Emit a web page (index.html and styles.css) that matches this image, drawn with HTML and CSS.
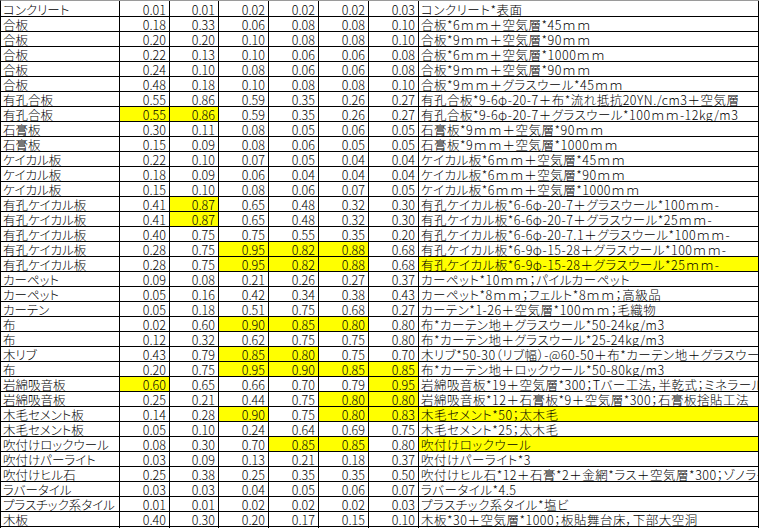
FILE: index.html
```html
<!DOCTYPE html>
<html lang="ja">
<head>
<meta charset="utf-8">
<title>吸音率表</title>
<link rel="stylesheet" href="styles.css">
</head>
<body>
<div class="sheet">
<div class="row first"><div class="c a">コンクリート</div><div class="c n">0.01</div><div class="c n">0.01</div><div class="c n">0.02</div><div class="c n">0.02</div><div class="c n">0.02</div><div class="c n">0.03</div><div class="c t">コンクリート*表面</div></div>
<div class="row"><div class="c a">合板</div><div class="c n">0.18</div><div class="c n">0.33</div><div class="c n">0.06</div><div class="c n">0.08</div><div class="c n">0.08</div><div class="c n">0.10</div><div class="c t">合板*6ｍｍ＋空気層*45ｍｍ</div></div>
<div class="row"><div class="c a">合板</div><div class="c n">0.20</div><div class="c n">0.20</div><div class="c n">0.10</div><div class="c n">0.08</div><div class="c n">0.08</div><div class="c n">0.10</div><div class="c t">合板*9ｍｍ＋空気層*90ｍｍ</div></div>
<div class="row"><div class="c a">合板</div><div class="c n">0.22</div><div class="c n">0.13</div><div class="c n">0.10</div><div class="c n">0.06</div><div class="c n">0.06</div><div class="c n">0.08</div><div class="c t">合板*6ｍｍ＋空気層*1000ｍｍ</div></div>
<div class="row"><div class="c a">合板</div><div class="c n">0.24</div><div class="c n">0.10</div><div class="c n">0.08</div><div class="c n">0.06</div><div class="c n">0.06</div><div class="c n">0.08</div><div class="c t">合板*9ｍｍ＋空気層*90ｍｍ</div></div>
<div class="row"><div class="c a">合板</div><div class="c n">0.48</div><div class="c n">0.18</div><div class="c n">0.10</div><div class="c n">0.08</div><div class="c n">0.08</div><div class="c n">0.10</div><div class="c t">合板*9ｍｍ＋グラスウール*45ｍｍ</div></div>
<div class="row"><div class="c a">有孔合板</div><div class="c n">0.55</div><div class="c n">0.86</div><div class="c n">0.59</div><div class="c n">0.35</div><div class="c n">0.26</div><div class="c n">0.27</div><div class="c t">有孔合板*9-6φ-20-7＋布*流れ抵抗20YN./cm3＋空気層</div></div>
<div class="row"><div class="c a">有孔合板</div><div class="c n y">0.55</div><div class="c n y">0.86</div><div class="c n">0.59</div><div class="c n">0.35</div><div class="c n">0.26</div><div class="c n">0.27</div><div class="c t">有孔合板*9-6φ-20-7＋グラスウール*100ｍｍ-12kg/m3</div></div>
<div class="row"><div class="c a">石膏板</div><div class="c n">0.30</div><div class="c n">0.11</div><div class="c n">0.08</div><div class="c n">0.05</div><div class="c n">0.06</div><div class="c n">0.05</div><div class="c t">石膏板*9ｍｍ＋空気層*90ｍｍ</div></div>
<div class="row"><div class="c a">石膏板</div><div class="c n">0.15</div><div class="c n">0.09</div><div class="c n">0.08</div><div class="c n">0.06</div><div class="c n">0.05</div><div class="c n">0.05</div><div class="c t">石膏板*9ｍｍ＋空気層*1000ｍｍ</div></div>
<div class="row"><div class="c a">ケイカル板</div><div class="c n">0.22</div><div class="c n">0.10</div><div class="c n">0.07</div><div class="c n">0.05</div><div class="c n">0.04</div><div class="c n">0.04</div><div class="c t">ケイカル板*6ｍｍ＋空気層*45ｍｍ</div></div>
<div class="row"><div class="c a">ケイカル板</div><div class="c n">0.18</div><div class="c n">0.09</div><div class="c n">0.06</div><div class="c n">0.04</div><div class="c n">0.04</div><div class="c n">0.04</div><div class="c t">ケイカル板*6ｍｍ＋空気層*90ｍｍ</div></div>
<div class="row"><div class="c a">ケイカル板</div><div class="c n">0.15</div><div class="c n">0.10</div><div class="c n">0.08</div><div class="c n">0.06</div><div class="c n">0.07</div><div class="c n">0.05</div><div class="c t">ケイカル板*6ｍｍ＋空気層*1000ｍｍ</div></div>
<div class="row"><div class="c a">有孔ケイカル板</div><div class="c n">0.41</div><div class="c n y">0.87</div><div class="c n">0.65</div><div class="c n">0.48</div><div class="c n">0.32</div><div class="c n">0.30</div><div class="c t">有孔ケイカル板*6-6φ-20-7＋グラスウール*100ｍｍ-</div></div>
<div class="row"><div class="c a">有孔ケイカル板</div><div class="c n">0.41</div><div class="c n y">0.87</div><div class="c n">0.65</div><div class="c n">0.48</div><div class="c n">0.32</div><div class="c n">0.30</div><div class="c t">有孔ケイカル板*6-6φ-20-7＋グラスウール*25ｍｍ-</div></div>
<div class="row"><div class="c a">有孔ケイカル板</div><div class="c n">0.40</div><div class="c n">0.75</div><div class="c n">0.75</div><div class="c n">0.55</div><div class="c n">0.35</div><div class="c n">0.20</div><div class="c t">有孔ケイカル板*6-6φ-20-7.1＋グラスウール*100ｍｍ-</div></div>
<div class="row"><div class="c a">有孔ケイカル板</div><div class="c n">0.28</div><div class="c n">0.75</div><div class="c n y">0.95</div><div class="c n y">0.82</div><div class="c n y">0.88</div><div class="c n">0.68</div><div class="c t">有孔ケイカル板*6-9φ-15-28＋グラスウール*100ｍｍ-</div></div>
<div class="row"><div class="c a">有孔ケイカル板</div><div class="c n">0.28</div><div class="c n">0.75</div><div class="c n y">0.95</div><div class="c n y">0.82</div><div class="c n y">0.88</div><div class="c n">0.68</div><div class="c t y">有孔ケイカル板*6-9φ-15-28＋グラスウール*25ｍｍ-</div></div>
<div class="row"><div class="c a">カーペット</div><div class="c n">0.09</div><div class="c n">0.08</div><div class="c n">0.21</div><div class="c n">0.26</div><div class="c n">0.27</div><div class="c n">0.37</div><div class="c t">カーペット*10ｍｍ；パイルカーペット</div></div>
<div class="row"><div class="c a">カーペット</div><div class="c n">0.05</div><div class="c n">0.16</div><div class="c n">0.42</div><div class="c n">0.34</div><div class="c n">0.38</div><div class="c n">0.43</div><div class="c t">カーペット*8ｍｍ；フェルト*8ｍｍ；高級品</div></div>
<div class="row"><div class="c a">カーテン</div><div class="c n">0.05</div><div class="c n">0.18</div><div class="c n">0.51</div><div class="c n">0.75</div><div class="c n">0.68</div><div class="c n">0.27</div><div class="c t">カーテン*1-26＋空気層*100ｍｍ；毛織物</div></div>
<div class="row"><div class="c a">布</div><div class="c n">0.02</div><div class="c n">0.60</div><div class="c n y">0.90</div><div class="c n y">0.85</div><div class="c n y">0.80</div><div class="c n">0.80</div><div class="c t">布*カーテン地＋グラスウール*50-24kg/m3</div></div>
<div class="row"><div class="c a">布</div><div class="c n">0.12</div><div class="c n">0.32</div><div class="c n">0.62</div><div class="c n">0.75</div><div class="c n">0.75</div><div class="c n">0.80</div><div class="c t">布*カーテン地＋グラスウール*25-24kg/m3</div></div>
<div class="row"><div class="c a">木リブ</div><div class="c n">0.43</div><div class="c n">0.79</div><div class="c n y">0.85</div><div class="c n y">0.80</div><div class="c n">0.75</div><div class="c n">0.70</div><div class="c t">木リブ*50-30（リブ幅）-@60-50＋布*カーテン地＋グラスウール</div></div>
<div class="row"><div class="c a">布</div><div class="c n">0.20</div><div class="c n">0.75</div><div class="c n y">0.95</div><div class="c n y">0.90</div><div class="c n y">0.85</div><div class="c n y">0.85</div><div class="c t">布*カーテン地＋ロックウール*50-80kg/m3</div></div>
<div class="row"><div class="c a">岩綿吸音板</div><div class="c n y">0.60</div><div class="c n">0.65</div><div class="c n">0.66</div><div class="c n">0.70</div><div class="c n">0.79</div><div class="c n y">0.95</div><div class="c t">岩綿吸音板*19＋空気層*300；Tバー工法，半乾式；ミネラールウール</div></div>
<div class="row"><div class="c a">岩綿吸音板</div><div class="c n">0.25</div><div class="c n">0.21</div><div class="c n">0.44</div><div class="c n">0.75</div><div class="c n y">0.80</div><div class="c n y">0.80</div><div class="c t">岩綿吸音板*12＋石膏板*9＋空気層*300；石膏板捨貼工法</div></div>
<div class="row"><div class="c a">木毛セメント板</div><div class="c n">0.14</div><div class="c n">0.28</div><div class="c n y">0.90</div><div class="c n">0.75</div><div class="c n y">0.80</div><div class="c n y">0.83</div><div class="c t y">木毛セメント*50；太木毛</div></div>
<div class="row"><div class="c a">木毛セメント板</div><div class="c n">0.05</div><div class="c n">0.10</div><div class="c n">0.24</div><div class="c n">0.64</div><div class="c n">0.69</div><div class="c n">0.75</div><div class="c t">木毛セメント*25；太木毛</div></div>
<div class="row"><div class="c a">吹付けロックウール</div><div class="c n">0.08</div><div class="c n">0.30</div><div class="c n">0.70</div><div class="c n y">0.85</div><div class="c n y">0.85</div><div class="c n">0.80</div><div class="c t y">吹付けロックウール</div></div>
<div class="row"><div class="c a">吹付けパーライト</div><div class="c n">0.03</div><div class="c n">0.09</div><div class="c n">0.13</div><div class="c n">0.21</div><div class="c n">0.18</div><div class="c n">0.37</div><div class="c t">吹付けパーライト*3</div></div>
<div class="row"><div class="c a">吹付けヒル石</div><div class="c n">0.25</div><div class="c n">0.38</div><div class="c n">0.25</div><div class="c n">0.35</div><div class="c n">0.35</div><div class="c n">0.50</div><div class="c t">吹付けヒル石*12＋石膏*2＋金網*ラス＋空気層*300；ゾノライト</div></div>
<div class="row"><div class="c a">ラバータイル</div><div class="c n">0.03</div><div class="c n">0.03</div><div class="c n">0.04</div><div class="c n">0.05</div><div class="c n">0.06</div><div class="c n">0.07</div><div class="c t">ラバータイル*4.5</div></div>
<div class="row"><div class="c a">プラスチック系タイル</div><div class="c n">0.01</div><div class="c n">0.01</div><div class="c n">0.02</div><div class="c n">0.02</div><div class="c n">0.02</div><div class="c n">0.03</div><div class="c t">プラスチック系タイル*塩ビ</div></div>
<div class="row"><div class="c a">木板</div><div class="c n">0.40</div><div class="c n">0.30</div><div class="c n">0.20</div><div class="c n">0.17</div><div class="c n">0.15</div><div class="c n">0.10</div><div class="c t">木板*30＋空気層*1000；板貼舞台床，下部大空洞</div></div>
<div class="row"><div class="c a"></div><div class="c n"></div><div class="c n"></div><div class="c n"></div><div class="c n"></div><div class="c n"></div><div class="c n"></div><div class="c t"></div></div>
</div>
</body>
</html>
```

FILE: styles.css
```css
html, body {
  margin: 0;
  padding: 0;
  overflow: hidden;
  background: #ffffff;
}

.sheet {
  width: 758px;
  border-left: 1px solid #000000;
  border-top: 1px solid #9a9a9a;
  font-family: "Noto Sans CJK JP", "Noto Sans", sans-serif;
  font-size: 12.5px;
  font-weight: 300;
  font-feature-settings: "palt";
  color: #000000;
}

.row {
  display: grid;
  grid-template-columns: 119px 50px 49px 50px 50px 50px 50px 340px;
  height: 15px;
}

.row.first {
  height: 16px;
}

.c {
  box-sizing: border-box;
  border-right: 1px solid #000000;
  border-bottom: 1px solid #000000;
  display: flex;
  align-items: flex-end;
  overflow: hidden;
  white-space: nowrap;
  line-height: 13px;
}

.n {
  justify-content: flex-end;
  padding-right: 3px;
}

.a,
.t {
  padding-left: 2px;
}

.t {
  letter-spacing: 0.5px;
}

.y {
  background: #ffff00;
}
```
